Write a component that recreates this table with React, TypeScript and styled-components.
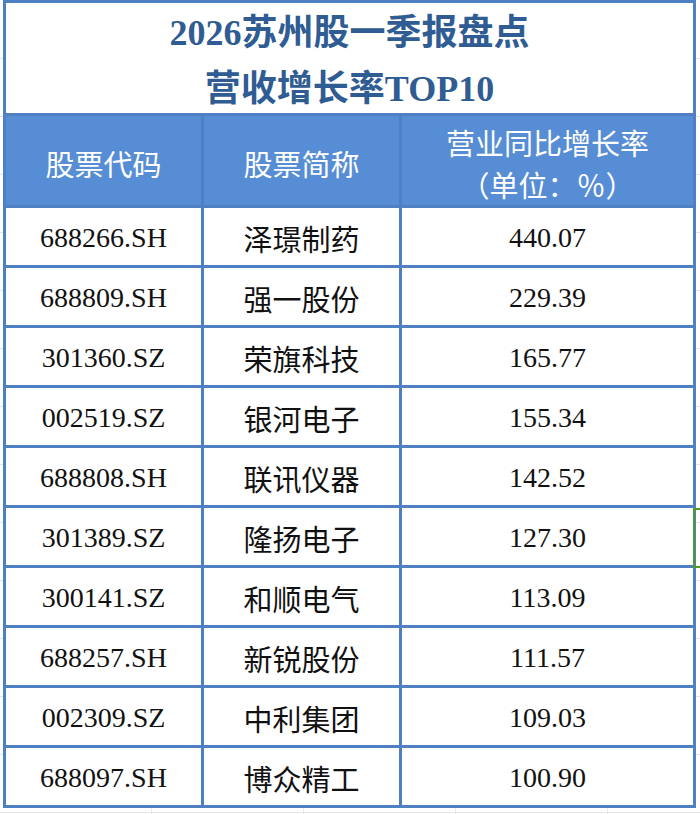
import React from 'react'
import styled, { createGlobalStyle } from 'styled-components'

const GlobalStyle = createGlobalStyle`
    html, body {
        margin: 0;
        padding: 0;
        background: #ffffff;
    }
    body {
        font-family: "Liberation Serif", "Noto Sans CJK SC", serif;
    }
`

const Page = styled.div`
    position: relative;
    width: 700px;
    height: 814px;
    overflow: hidden;
    background-color: #ffffff;
    background-image:
        repeating-linear-gradient(to bottom, transparent 0, transparent 57px, #e4e4e4 57px, #e4e4e4 58px),
        repeating-linear-gradient(to right, transparent 0, transparent 151px, #ececec 151px, #ececec 152px);
    background-position: 0 1px, 0 0;
    padding-left: 3px;
    box-sizing: border-box;
`

const Sheet = styled.div`
    width: 693px;
    display: grid;
    grid-template-columns: 195px 195px 291px;
    grid-template-rows: 110px 89px repeat(10, 57px);
    gap: 3px;
    padding: 3px;
    box-sizing: border-box;
    background: #4f80c4;
`

const Title = styled.div`
    grid-column: 1 / 4;
    background: #ffffff;
    display: flex;
    flex-direction: column;
    align-items: center;
    justify-content: center;
    color: #2f5c93;
    font-size: 36px;
    font-weight: 700;
    line-height: 56px;
    padding-top: 5px;
    box-sizing: border-box;
`

const HeadCell = styled.div`
    background: #568dd5;
    color: #ffffff;
    font-family: "Noto Sans CJK SC", sans-serif;
    font-size: 29px;
    line-height: 42px;
    display: flex;
    flex-direction: column;
    align-items: center;
    justify-content: center;
    padding-top: 4px;
    box-sizing: border-box;
`

const Cell = styled.div<{ $cjk?: boolean }>`
    background: #ffffff;
    color: #111111;
    display: flex;
    align-items: center;
    justify-content: center;
    font-family: ${p => (p.$cjk ? '"Noto Sans CJK SC", sans-serif' : '"Liberation Serif", serif')};
    font-size: ${p => (p.$cjk ? '29px' : '28px')};
    padding-top: 2px;
    box-sizing: border-box;
`

const Selection = styled.div`
    position: absolute;
    left: 693px;
    top: 508px;
    width: 20px;
    height: 56px;
    border: 2px solid #4f9a2b;
`

const rows: [string, string, string][] = [
    ['688266.SH', '泽璟制药', '440.07'],
    ['688809.SH', '强一股份', '229.39'],
    ['301360.SZ', '荣旗科技', '165.77'],
    ['002519.SZ', '银河电子', '155.34'],
    ['688808.SH', '联讯仪器', '142.52'],
    ['301389.SZ', '隆扬电子', '127.30'],
    ['300141.SZ', '和顺电气', '113.09'],
    ['688257.SH', '新锐股份', '111.57'],
    ['002309.SZ', '中利集团', '109.03'],
    ['688097.SH', '博众精工', '100.90'],
]

const App: React.FC = () => {
    return (
        <Page>
            <GlobalStyle />
            <Sheet>
                <Title>
                    <span>2026苏州股一季报盘点</span>
                    <span>营收增长率TOP10</span>
                </Title>
                <HeadCell>股票代码</HeadCell>
                <HeadCell>股票简称</HeadCell>
                <HeadCell>
                    <span>营业同比增长率</span>
                    <span>（单位：％）</span>
                </HeadCell>
                {rows.map(([code, name, rate]) => (
                    <React.Fragment key={code}>
                        <Cell>{code}</Cell>
                        <Cell $cjk>{name}</Cell>
                        <Cell>{rate}</Cell>
                    </React.Fragment>
                ))}
            </Sheet>
            <Selection />
        </Page>
    )
}

export default App
